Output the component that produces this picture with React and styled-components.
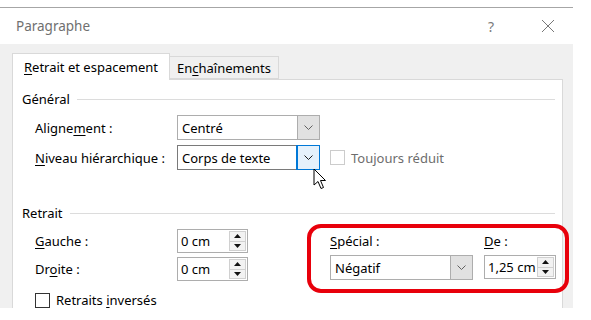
import React from 'react';
import styled, { createGlobalStyle } from 'styled-components';

const Global = createGlobalStyle`
  body {
    margin: 0;
    background: #fff;
    font-family: "Noto Sans", "DejaVu Sans", sans-serif;
    font-size: 13px;
    color: #000;
  }
`;

const Dialog = styled.div`
  margin-top: 7px;
  width: 573px;
  border-top: 1px solid #a6a6a6;
`;

const TitleBar = styled.div`
  height: 36px;
  display: flex;
  align-items: center;
  padding-left: 16px;
  padding-right: 10px;
  background: #fff;
`;

const Title = styled.div`
  flex: 1;
  font-size: 13.5px;
  color: #707070;
`;

const TitleBtn = styled.div`
  width: ${(p) => p.w}px;
  margin-left: ${(p) => p.ml || 0}px;
  display: flex;
  justify-content: center;
  color: #7a7a7a;
  font-size: 14px;
`;

const Body = styled.div`
  height: 264px;
  background: #f0f0f0;
  padding: 9px 10px 0 12px;
  box-sizing: border-box;
  overflow: hidden;
`;

const Tabs = styled.div`
  display: flex;
  align-items: flex-end;
  position: relative;
  z-index: 1;
`;

const Tab = styled.div`
  height: ${(p) => (p.active ? 27 : 23)}px;
  padding: 0 ${(p) => (p.active ? 11 : 7)}px;
  display: flex;
  align-items: center;
  border: 1px solid #d9d9d9;
  border-bottom: ${(p) => (p.active ? 'none' : '1px solid #d9d9d9')};
  border-left: ${(p) => (p.active ? '1px solid #d9d9d9' : 'none')};
  background: ${(p) => (p.active ? '#fff' : '#f0f0f0')};
  margin-bottom: ${(p) => (p.active ? -1 : 0)}px;
  box-sizing: border-box;
  white-space: nowrap;
`;

const Panel = styled.div`
  background: #fff;
  border: 1px solid #d9d9d9;
  height: 260px;
  padding: 10px 7px 0 9px;
  box-sizing: border-box;
`;

const GroupHead = styled.div`
  display: flex;
  align-items: center;
  height: 18px;
  margin-top: ${(p) => p.mt || 0}px;
  &::after {
    content: '';
    flex: 1;
    height: 1px;
    background: #dcdcdc;
    margin-left: 7px;
  }
`;

const Rows = styled.div`
  display: flex;
  flex-direction: column;
  gap: ${(p) => p.gap}px;
  padding-left: 13px;
  margin-top: ${(p) => p.mt}px;
`;

const Row = styled.div`
  display: flex;
  align-items: center;
`;

const Label = styled.div`
  width: ${(p) => p.w || 142}px;
  flex-shrink: 0;
`;

const U = styled.span`
  text-decoration: underline;
  text-underline-offset: 2px;
`;

const Select = styled.div`
  position: relative;
  width: ${(p) => p.w}px;
  height: 25px;
  border: 1px solid ${(p) => (p.focus ? '#7a7a7a' : '#adadad')};
  box-sizing: border-box;
  display: flex;
  align-items: stretch;
  background: #fff;
  flex-shrink: 0;
`;

const SelectText = styled.div`
  flex: 1;
  display: flex;
  align-items: center;
  padding-left: 4px;
`;

const SelectBtn = styled.div`
  width: 21px;
  display: flex;
  align-items: center;
  justify-content: center;
  background: ${(p) => (p.hot ? '#e5f1fb' : '#e1e1e1')};
  border-left: 1px solid ${(p) => (p.hot ? '#0078d7' : '#adadad')};
  outline: ${(p) => (p.hot ? '1px solid #0078d7' : 'none')};
  color: ${(p) => (p.hot ? '#1a1a1a' : '#606060')};
`;

const Check = styled.div`
  display: flex;
  align-items: center;
  gap: 6px;
  margin-left: ${(p) => p.ml || 0}px;
  margin-top: ${(p) => p.mt || 0}px;
  color: ${(p) => (p.disabled ? '#6d6d6d' : '#000')};
  white-space: nowrap;
  &::before {
    content: '';
    width: 13px;
    height: 13px;
    border: 1px solid ${(p) => (p.disabled ? '#cccccc' : '#333')};
    background: #fff;
  }
`;

const Spin = styled.div`
  width: ${(p) => p.w}px;
  height: 24px;
  border: 1px solid #adadad;
  box-sizing: border-box;
  display: flex;
  align-items: center;
  padding-left: 3px;
  padding-right: 1px;
  background: #fff;
`;

const SpinText = styled.div`
  flex: 1;
  white-space: nowrap;
`;

const SpinBtns = styled.div`
  width: 17px;
  height: 20px;
  display: flex;
  flex-direction: column;
  border: 1px solid #d0d0d0;
  box-sizing: border-box;
  background: #f2f2f2;
`;

const SpinHalf = styled.div`
  flex: 1;
  display: flex;
  align-items: center;
  justify-content: center;
  & + & {
    border-top: 1px solid #d0d0d0;
  }
`;

const Retrait = styled.div`
  display: flex;
  align-items: flex-start;
  margin-top: 2px;
  padding-left: 13px;
`;

const LeftCol = styled.div`
  width: 272px;
  flex-shrink: 0;
  display: flex;
  flex-direction: column;
  gap: 4px;
  padding-top: 5px;
`;

const Highlight = styled.div`
  width: 262px;
  height: 69px;
  flex-shrink: 0;
  box-sizing: border-box;
  border: 4px solid #e8000b;
  border-radius: 14px;
  display: flex;
  gap: 11px;
  padding: 4px 0 0 19px;
`;

const Field = styled.div`
  display: flex;
  flex-direction: column;
  gap: 5px;
`;

const Cursor = styled.svg`
  position: absolute;
  left: 135px;
  top: 22px;
  z-index: 2;
`;

const Chevron = () => (
  <svg width="9" height="5" viewBox="0 0 9 5">
    <path d="M0.5 0.5 L4.5 4.5 L8.5 0.5" fill="none" stroke="currentColor" strokeWidth="1" />
  </svg>
);

const Arrows = () => (
  <SpinBtns>
    <SpinHalf>
      <svg width="7" height="4" viewBox="0 0 7 4"><path d="M0 4 L3.5 0 L7 4 Z" fill="#111" /></svg>
    </SpinHalf>
    <SpinHalf>
      <svg width="7" height="4" viewBox="0 0 7 4"><path d="M0 0 L3.5 4 L7 0 Z" fill="#111" /></svg>
    </SpinHalf>
  </SpinBtns>
);

export default function App() {
  return (
    <>
      <Global />
      <Dialog>
        <TitleBar>
          <Title>Paragraphe</Title>
          <TitleBtn w={20}>?</TitleBtn>
          <TitleBtn w={30} ml={32}>
            <svg width="14" height="14" viewBox="0 0 14 14">
              <path d="M1 1 L13 13 M13 1 L1 13" stroke="#777" strokeWidth="1" />
            </svg>
          </TitleBtn>
        </TitleBar>
        <Body>
          <Tabs>
            <Tab active>
              <span><U>R</U>etrait et espacement</span>
            </Tab>
            <Tab>
              <span>En<U>c</U>haînements</span>
            </Tab>
          </Tabs>
          <Panel>
            <GroupHead>Général</GroupHead>
            <Rows gap={5} mt={7}>
              <Row>
                <Label>Aligne<U>m</U>ent :</Label>
                <Select w={143}>
                  <SelectText>Centré</SelectText>
                  <SelectBtn><Chevron /></SelectBtn>
                </Select>
              </Row>
              <Row>
                <Label><U>N</U>iveau hiérarchique :</Label>
                <Select w={143} focus>
                  <SelectText>Corps de texte</SelectText>
                  <SelectBtn hot><Chevron /></SelectBtn>
                  <Cursor width="14" height="22" viewBox="0 0 14 22">
                    <path d="M1 1 L1 17 L5 13.5 L8 20.5 L10.5 19.5 L7.5 12.5 L12.5 12.5 Z" fill="#fff" stroke="#000" strokeWidth="1" strokeLinejoin="round" />
                  </Cursor>
                </Select>
                <Check disabled ml={10}><span>Toujours réduit</span></Check>
              </Row>
            </Rows>
            <GroupHead mt={34}>Retrait</GroupHead>
            <Retrait>
              <LeftCol>
                <Row>
                  <Label><U>G</U>auche :</Label>
                  <Spin w={71}><SpinText>0 cm</SpinText><Arrows /></Spin>
                </Row>
                <Row>
                  <Label>Dr<U>o</U>ite :</Label>
                  <Spin w={71}><SpinText>0 cm</SpinText><Arrows /></Spin>
                </Row>
                <Check mt={6}><span>Retraits <U>i</U>nversés</span></Check>
              </LeftCol>
              <Highlight>
                <Field>
                  <Label w={142}><U>S</U>pécial :</Label>
                  <Select w={143}>
                    <SelectText>Négatif</SelectText>
                    <SelectBtn><Chevron /></SelectBtn>
                  </Select>
                </Field>
                <Field>
                  <Label w={72}><U>D</U>e :</Label>
                  <Spin w={72}><SpinText>1,25 cm</SpinText><Arrows /></Spin>
                </Field>
              </Highlight>
            </Retrait>
          </Panel>
        </Body>
      </Dialog>
    </>
  );
}
